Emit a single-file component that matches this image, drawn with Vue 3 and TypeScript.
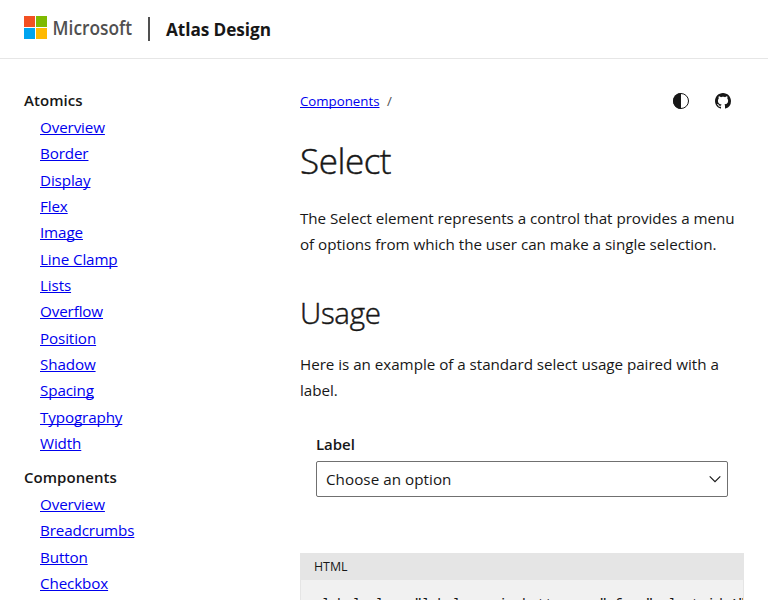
<script setup lang="ts">
interface NavGroup {
  title: string
  items: string[]
}

const groups: NavGroup[] = [
  {
    title: 'Atomics',
    items: ['Overview', 'Border', 'Display', 'Flex', 'Image', 'Line Clamp', 'Lists', 'Overflow', 'Position', 'Shadow', 'Spacing', 'Typography', 'Width'],
  },
  { title: 'Components', items: ['Overview', 'Breadcrumbs', 'Button', 'Checkbox'] },
]

const code = '<label class="label margin-bottom-xxs" for="select-id-1">Label</label>'
</script>

<template>
  <div class="page">
    <header class="header">
      <svg class="logo" width="109" height="28" viewBox="0 0 109 28" role="img">
        <rect width="11" height="11" fill="#f25022" />
        <rect x="12" width="11" height="11" fill="#7fba00" />
        <rect y="12" width="11" height="11" fill="#00a4ef" />
        <rect x="12" y="12" width="11" height="11" fill="#ffb900" />
        <text x="28.6" y="18.6" textLength="79.6" lengthAdjust="spacingAndGlyphs">Microsoft</text>
      </svg>
      <span class="divider"></span>
      <span class="site">Atlas Design</span>
    </header>

    <div class="body">
      <nav class="nav">
        <section v-for="g in groups" :key="g.title" class="group">
          <div class="group-title">{{ g.title }}</div>
          <ul>
            <li v-for="i in g.items" :key="i"><a href="#">{{ i }}</a></li>
          </ul>
        </section>
      </nav>

      <main class="main">
        <div class="topbar">
          <div class="crumbs"><a href="#">Components</a><span class="slash">/</span></div>
          <div class="actions">
            <svg width="16" height="16" viewBox="0 0 16 16">
              <circle cx="8" cy="8" r="7.5" fill="#fff" stroke="#171717" />
              <path d="M8 0a8 8 0 0 0 0 16z" fill="#171717" />
            </svg>
            <svg width="16" height="16" viewBox="0 0 16 16">
              <path fill="#171717" d="M8 0C3.58 0 0 3.58 0 8c0 3.54 2.29 6.53 5.47 7.59.4.07.55-.17.55-.38 0-.19-.01-.82-.01-1.49-2.01.37-2.53-.49-2.69-.94-.09-.23-.48-.94-.82-1.13-.28-.15-.68-.52-.01-.53.63-.01 1.08.58 1.23.82.72 1.21 1.87.87 2.33.66.07-.52.28-.87.51-1.07-1.78-.2-3.64-.89-3.64-3.95 0-.87.31-1.59.82-2.15-.08-.2-.36-1.02.08-2.12 0 0 .67-.21 2.2.82.64-.18 1.32-.27 2-.27s1.36.09 2 .27c1.53-1.04 2.2-.82 2.2-.82.44 1.1.16 1.92.08 2.12.51.56.82 1.27.82 2.15 0 3.07-1.87 3.75-3.65 3.95.29.25.54.73.54 1.48 0 1.07-.01 1.93-.01 2.2 0 .21.15.46.55.38A8.01 8.01 0 0 0 16 8c0-4.42-3.58-8-8-8z" />
            </svg>
          </div>
        </div>
        <h1>Select</h1>
        <p class="intro">The Select element represents a control that provides a menu of options from which the user can make a single selection.</p>
        <h2>Usage</h2>
        <p>Here is an example of a standard select usage paired with a label.</p>

        <div class="example">
          <div class="label">Label</div>
          <div class="select">
            <span>Choose an option</span>
            <svg width="12" height="8" viewBox="0 0 12 8"><path d="M.7 1.4 6 6.7l5.3-5.3" fill="none" stroke="#171717" stroke-width="1.15" /></svg>
          </div>
        </div>

        <div class="snippet">
          <div class="lang">HTML</div>
          <pre>{{ code }}</pre>
        </div>
      </main>
    </div>
  </div>
</template>

<style>
body {
  overflow: hidden;
}
</style>

<style scoped>
.page {
  height: 600px;
  overflow: hidden;
  background: #fff;
  color: #171717;
  font-family: "Open Sans", sans-serif;
  font-size: 15.2px;
  letter-spacing: -0.03px;
}
.header {
  display: flex;
  align-items: flex-start;
  box-sizing: border-box;
  height: 59px;
  padding: 16px 24px 0;
  border-bottom: 1px solid #e6e6e6;
}
.logo {
  overflow: visible;
}
.logo text {
  font: 600 19.5px "Open Sans", sans-serif;
  letter-spacing: 0;
  fill: #505050;
}
.divider {
  width: 2px;
  height: 24px;
  margin: 1px 16px 0 15px;
  background: #505050;
}
.site {
  font-size: 17.2px;
  font-weight: 700;
  line-height: 27px;
  letter-spacing: -0.06px;
}
.body {
  display: flex;
}
.nav {
  flex: none;
  width: 276px;
  padding: 28px 0 0 24px;
  box-sizing: border-box;
  line-height: 26.35px;
}
.group {
  margin-bottom: 7.5px;
}
.group-title {
  font-weight: 600;
  font-size: 15px;
  letter-spacing: 0.05px;
}
.group ul {
  margin: 0;
  padding: 0.7px 0 0 16px;
  list-style: none;
}
a {
  color: #0000ee;
  text-decoration: underline;
  text-decoration-thickness: 1px;
  text-underline-offset: 1px;
  text-decoration-skip-ink: none;
}
.nav a {
  letter-spacing: -0.12px;
}
.main {
  flex: 1;
  min-width: 0;
  padding: 30px 24px 0;
}
.topbar {
  display: flex;
  justify-content: space-between;
  align-items: center;
  height: 24px;
}
.crumbs {
  font-size: 13.3px;
  letter-spacing: -0.02px;
}
.slash {
  margin-left: 7.5px;
  color: #505050;
}
.actions {
  display: flex;
  gap: 26px;
  margin-right: 13px;
}
h1,
h2 {
  font-weight: 300;
  -webkit-text-stroke: 0.45px #171717;
}
h1 {
  margin: 26px 0 22px;
  font-size: 35px;
  line-height: 44px;
  letter-spacing: -0.45px;
}
h2 {
  margin: 38px 0 20px;
  font-size: 29.5px;
  line-height: 36px;
  letter-spacing: -0.3px;
}
p {
  margin: 0;
  line-height: 26px;
}
.example {
  padding: 28px 16px 56px;
}
.label {
  font-weight: 600;
  font-size: 15px;
  line-height: 26px;
}
.select {
  display: flex;
  align-items: center;
  justify-content: space-between;
  box-sizing: border-box;
  height: 36px;
  margin-top: 4px;
  padding: 0 6px 0 9px;
  border: 1px solid #707070;
  border-radius: 2px;
  letter-spacing: 0.05px;
}
.snippet {
  border: 1px solid #e5e5e5;
  border-top: 0;
  background: #f1f1f1;
}
.lang {
  padding-left: 13px;
  background: #e5e5e5;
  font-size: 12.4px;
  line-height: 27px;
}
pre {
  margin: 0;
  padding: 15px 0 40px 13px;
  overflow: hidden;
  font: 14px/20px "Liberation Mono", monospace;
  letter-spacing: -0.7px;
}
</style>
